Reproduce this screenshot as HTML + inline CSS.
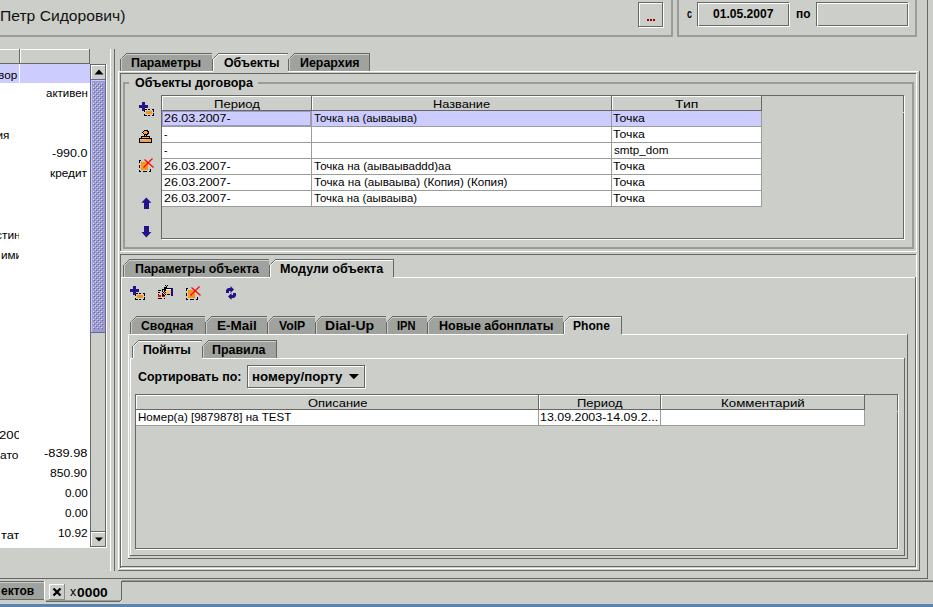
<!DOCTYPE html><html><head><meta charset="utf-8"><style>
html,body{margin:0;padding:0;width:933px;height:607px;overflow:hidden;background:#ccceca}
body>div,.a{position:absolute}
.t{position:absolute;white-space:pre;font-family:"Liberation Sans",sans-serif}
.clip{position:absolute;overflow:hidden}
.clip>div{position:absolute}
</style></head><body>
<div class="t" style="left:-0.40px;top:5.70px;font-size:15.30px;line-height:20px;color:#111;transform:scaleX(1.0232);transform-origin:0 0;">Петр Сидорович)</div>
<div style="left:0px;top:35px;width:673px;height:2px;background:#9a9c98;"></div>
<div style="left:671px;top:0px;width:2px;height:37px;background:#9a9c98;"></div>
<div style="left:638px;top:2px;width:25px;height:1px;background:#666866;"></div>
<div style="left:638px;top:26px;width:25px;height:1px;background:#666866;"></div>
<div style="left:638px;top:2px;width:1px;height:25px;background:#666866;"></div>
<div style="left:662px;top:2px;width:1px;height:25px;background:#666866;"></div>
<div style="left:639px;top:27px;width:25px;height:1px;background:#ffffff;"></div>
<div style="left:663px;top:3px;width:1px;height:25px;background:#ffffff;"></div>
<div style="left:639px;top:3px;width:23px;height:1px;background:#ffffff;"></div>
<div style="left:639px;top:3px;width:1px;height:23px;background:#ffffff;"></div>
<div style="left:647px;top:19px;width:2px;height:2px;background:#990000;"></div>
<div style="left:650px;top:19px;width:2px;height:2px;background:#990000;"></div>
<div style="left:653px;top:19px;width:2px;height:2px;background:#990000;"></div>
<div style="left:677px;top:0px;width:2px;height:37px;background:#9a9c98;"></div>
<div style="left:677px;top:35px;width:240px;height:2px;background:#9a9c98;"></div>
<div style="left:915px;top:0px;width:2px;height:37px;background:#9a9c98;"></div>
<div class="t" style="left:687.00px;top:3.74px;font-size:12.30px;line-height:20px;color:#000;font-weight:bold;transform:scaleX(0.7259);transform-origin:0 0;">с</div>
<div style="left:697px;top:2px;width:92px;height:1px;background:#666866;"></div>
<div style="left:697px;top:25px;width:92px;height:1px;background:#666866;"></div>
<div style="left:697px;top:2px;width:1px;height:24px;background:#666866;"></div>
<div style="left:788px;top:2px;width:1px;height:24px;background:#666866;"></div>
<div style="left:698px;top:3px;width:92px;height:1px;background:#ffffff;"></div>
<div style="left:698px;top:26px;width:92px;height:1px;background:#ffffff;"></div>
<div style="left:698px;top:3px;width:1px;height:24px;background:#ffffff;"></div>
<div style="left:789px;top:3px;width:1px;height:24px;background:#ffffff;"></div>
<div style="left:697px;top:2px;width:92px;height:1px;background:#666866;"></div>
<div style="left:697px;top:2px;width:1px;height:24px;background:#666866;"></div>
<div class="t" style="left:712.70px;top:3.74px;font-size:12.30px;line-height:20px;color:#000;font-weight:bold;transform:scaleX(0.9821);transform-origin:0 0;">01.05.2007</div>
<div class="t" style="left:795.60px;top:3.74px;font-size:12.30px;line-height:20px;color:#000;font-weight:bold;transform:scaleX(0.9675);transform-origin:0 0;">по</div>
<div style="left:816px;top:2px;width:92px;height:1px;background:#666866;"></div>
<div style="left:816px;top:25px;width:92px;height:1px;background:#666866;"></div>
<div style="left:816px;top:2px;width:1px;height:24px;background:#666866;"></div>
<div style="left:907px;top:2px;width:1px;height:24px;background:#666866;"></div>
<div style="left:817px;top:3px;width:92px;height:1px;background:#ffffff;"></div>
<div style="left:817px;top:26px;width:92px;height:1px;background:#ffffff;"></div>
<div style="left:817px;top:3px;width:1px;height:24px;background:#ffffff;"></div>
<div style="left:908px;top:3px;width:1px;height:24px;background:#ffffff;"></div>
<div style="left:816px;top:2px;width:92px;height:1px;background:#666866;"></div>
<div style="left:816px;top:2px;width:1px;height:24px;background:#666866;"></div>
<div style="left:927px;top:0px;width:1px;height:579px;background:#666866;"></div>
<div style="left:0px;top:64px;width:90px;height:484px;background:#ffffff;"></div>
<div style="left:0px;top:49px;width:90px;height:15px;background:#ccceca;"></div>
<div style="left:0px;top:49px;width:90px;height:1px;background:#ffffff;"></div>
<div style="left:0px;top:63px;width:90px;height:1px;background:#666866;"></div>
<div style="left:19px;top:49px;width:1px;height:15px;background:#666866;"></div>
<div style="left:20px;top:49px;width:1px;height:14px;background:#ffffff;"></div>
<div style="left:89px;top:49px;width:1px;height:15px;background:#666866;"></div>
<div style="left:0px;top:64px;width:19px;height:19px;background:#ccccff;"></div>
<div style="left:20px;top:64px;width:70px;height:19px;background:#ccccff;"></div>
<div class="t" style="left:-26.04px;top:65.02px;font-size:11.50px;line-height:20px;color:#000;transform:scaleX(1.0245);transform-origin:0 0;">договор</div>
<div class="t" style="left:45.50px;top:83.02px;font-size:11.50px;line-height:20px;color:#000;transform:scaleX(0.9982);transform-origin:0 0;">активен</div>
<div class="t" style="left:52.00px;top:143.02px;font-size:11.50px;line-height:20px;color:#000;transform:scaleX(1.0839);transform-origin:0 0;">-990.0</div>
<div class="t" style="left:50.40px;top:163.02px;font-size:11.50px;line-height:20px;color:#000;transform:scaleX(1.0279);transform-origin:0 0;">кредит</div>
<div class="t" style="left:44.00px;top:443.02px;font-size:11.50px;line-height:20px;color:#000;transform:scaleX(1.1132);transform-origin:0 0;">-839.98</div>
<div class="t" style="left:50.30px;top:463.02px;font-size:11.50px;line-height:20px;color:#000;transform:scaleX(1.0543);transform-origin:0 0;">850.90</div>
<div class="t" style="left:64.60px;top:483.02px;font-size:11.50px;line-height:20px;color:#000;transform:scaleX(1.0167);transform-origin:0 0;">0.00</div>
<div class="t" style="left:64.60px;top:503.02px;font-size:11.50px;line-height:20px;color:#000;transform:scaleX(1.0167);transform-origin:0 0;">0.00</div>
<div class="t" style="left:57.70px;top:523.02px;font-size:11.50px;line-height:20px;color:#000;transform:scaleX(1.0330);transform-origin:0 0;">10.92</div>
<div class="t" style="left:-10.42px;top:125.02px;font-size:11.50px;line-height:20px;color:#000;transform:scaleX(1.0182);transform-origin:0 0;">ния</div>
<div class="t" style="left:-0.50px;top:445.02px;font-size:11.50px;line-height:20px;color:#000;transform:scaleX(1.0390);transform-origin:0 0;">ато</div>
<div class="clip" style="left:0;top:0;width:19px;height:607px">
<div class="t" style="left:-4.50px;top:225.02px;font-size:11.50px;line-height:20px;color:#000;transform:scaleX(1.0382);transform-origin:0 0;">стинн</div>
<div class="t" style="left:0.80px;top:245.02px;font-size:11.50px;line-height:20px;color:#000;transform:scaleX(1.0169);transform-origin:0 0;">имии</div>
<div class="t" style="left:-0.60px;top:425.02px;font-size:11.50px;line-height:20px;color:#000;transform:scaleX(1.1438);transform-origin:0 0;">2000</div>
</div>
<div class="t" style="left:0.80px;top:525.02px;font-size:11.50px;line-height:20px;color:#000;transform:scaleX(1.1111);transform-origin:0 0;">тат</div>
<div style="left:19px;top:64px;width:1px;height:484px;background:#ffffff;"></div>
<div style="left:90px;top:64px;width:1px;height:484px;background:#666866;"></div>
<div style="left:105px;top:64px;width:1px;height:484px;background:#666866;"></div>
<div style="left:106px;top:64px;width:1px;height:484px;background:#ffffff;"></div>
<div style="left:90px;top:64px;width:16px;height:1px;background:#666866;"></div>
<div style="left:91px;top:65px;width:14px;height:1px;background:#ffffff;"></div>
<div style="left:91px;top:65px;width:1px;height:14px;background:#ffffff;"></div>
<svg class="a" style="left:90px;top:64px" width="17" height="15"><polygon points="4.5,10.5 9,5.5 13.5,10.5" fill="#000"/></svg>
<svg class="a" style="left:90px;top:79px" width="17" height="254" shape-rendering="crispEdges"><defs><pattern id="bm" x="3" y="4" width="4" height="4" patternUnits="userSpaceOnUse"><rect width="4" height="4" fill="#9c9cd0"/><rect x="0" y="0" width="1" height="1" fill="#dcdcff"/><rect x="1" y="1" width="1" height="1" fill="#666699"/><rect x="2" y="2" width="1" height="1" fill="#dcdcff"/><rect x="3" y="3" width="1" height="1" fill="#666699"/></pattern></defs><rect x="0" y="0" width="16" height="254" fill="#666699"/><rect x="1" y="1" width="14" height="252" fill="#ccccff"/><rect x="2" y="2" width="13" height="251" fill="#9c9cd0"/><rect x="3" y="4" width="10" height="246" fill="url(#bm)"/></svg>
<div style="left:90px;top:531px;width:16px;height:1px;background:#666866;"></div>
<div style="left:91px;top:532px;width:14px;height:1px;background:#ffffff;"></div>
<div style="left:91px;top:532px;width:1px;height:14px;background:#ffffff;"></div>
<div style="left:90px;top:546px;width:16px;height:1px;background:#666866;"></div>
<div style="left:90px;top:547px;width:17px;height:1px;background:#ffffff;"></div>
<svg class="a" style="left:90px;top:531px" width="17" height="17"><polygon points="5,6.5 9,10.5 13,6.5" fill="#000"/></svg>
<div style="left:110px;top:49px;width:1px;height:522px;background:#ffffff;"></div>
<div style="left:114px;top:49px;width:1px;height:522px;background:#666866;"></div>
<div style="left:124px;top:55px;width:88px;height:16px;background:#a0a29e;"></div>
<div style="left:122px;top:58px;width:2px;height:13px;background:#a0a29e;"></div>
<svg class="a" style="left:120px;top:53px" width="92" height="18"><line x1="1.5" y1="5.5" x2="6.5" y2="0.5" stroke="#666866" stroke-width="1"/><line x1="1.5" y1="6.5" x2="6.5" y2="1.5" stroke="#ccceca" stroke-width="1"/></svg>
<div style="left:126px;top:53px;width:86px;height:1px;background:#666866;"></div>
<div style="left:120px;top:59px;width:1px;height:12px;background:#666866;"></div>
<div style="left:126px;top:54px;width:85px;height:1px;background:#ccceca;"></div>
<div style="left:121px;top:59px;width:1px;height:12px;background:#ccceca;"></div>
<svg class="a" style="left:212px;top:53px" width="76" height="18"><line x1="1.5" y1="5.5" x2="6.5" y2="0.5" stroke="#666866" stroke-width="1"/><line x1="1.5" y1="6.5" x2="6.5" y2="1.5" stroke="#ffffff" stroke-width="1"/></svg>
<div style="left:218px;top:53px;width:70px;height:1px;background:#666866;"></div>
<div style="left:212px;top:59px;width:1px;height:12px;background:#666866;"></div>
<div style="left:218px;top:54px;width:69px;height:1px;background:#ffffff;"></div>
<div style="left:213px;top:59px;width:1px;height:12px;background:#ffffff;"></div>
<div style="left:292px;top:55px;width:78px;height:16px;background:#a0a29e;"></div>
<div style="left:290px;top:58px;width:2px;height:13px;background:#a0a29e;"></div>
<svg class="a" style="left:288px;top:53px" width="82" height="18"><line x1="1.5" y1="5.5" x2="6.5" y2="0.5" stroke="#666866" stroke-width="1"/><line x1="1.5" y1="6.5" x2="6.5" y2="1.5" stroke="#ccceca" stroke-width="1"/></svg>
<div style="left:294px;top:53px;width:76px;height:1px;background:#666866;"></div>
<div style="left:288px;top:59px;width:1px;height:12px;background:#666866;"></div>
<div style="left:294px;top:54px;width:75px;height:1px;background:#ccceca;"></div>
<div style="left:289px;top:59px;width:1px;height:12px;background:#ccceca;"></div>
<div style="left:369px;top:54px;width:1px;height:17px;background:#666866;"></div>
<div class="t" style="left:131.30px;top:52.74px;font-size:12.30px;line-height:20px;color:#000;font-weight:bold;transform:scaleX(1.0048);transform-origin:0 0;">Параметры</div>
<div class="t" style="left:223.50px;top:52.74px;font-size:12.30px;line-height:20px;color:#000;font-weight:bold;transform:scaleX(1.0005);transform-origin:0 0;">Объекты</div>
<div class="t" style="left:299.80px;top:52.74px;font-size:12.30px;line-height:20px;color:#000;font-weight:bold;transform:scaleX(1.0099);transform-origin:0 0;">Иерархия</div>
<div style="left:118px;top:71px;width:95px;height:1px;background:#ffffff;"></div>
<div style="left:288px;top:71px;width:631px;height:1px;background:#ffffff;"></div>
<div style="left:118px;top:71px;width:1px;height:499px;background:#ffffff;"></div>
<div style="left:118px;top:570px;width:802px;height:1px;background:#666866;"></div>
<div style="left:919px;top:71px;width:1px;height:500px;background:#666866;"></div>
<div style="left:120px;top:73px;width:797px;height:1px;background:#666866;"></div>
<div style="left:120px;top:73px;width:1px;height:179px;background:#666866;"></div>
<div style="left:916px;top:73px;width:1px;height:179px;background:#ffffff;"></div>
<div style="left:120px;top:251px;width:797px;height:1px;background:#ffffff;"></div>
<div style="left:120px;top:254px;width:797px;height:1px;background:#666866;"></div>
<div style="left:120px;top:254px;width:1px;height:315px;background:#666866;"></div>
<div style="left:916px;top:254px;width:1px;height:315px;background:#ffffff;"></div>
<div style="left:120px;top:568px;width:797px;height:1px;background:#ffffff;"></div>
<div style="left:123px;top:82px;width:2px;height:167px;background:#9a9c98;"></div>
<div style="left:912px;top:82px;width:2px;height:167px;background:#9a9c98;"></div>
<div style="left:123px;top:247px;width:791px;height:2px;background:#9a9c98;"></div>
<div style="left:123px;top:82px;width:6px;height:2px;background:#9a9c98;"></div>
<div style="left:258px;top:82px;width:656px;height:2px;background:#9a9c98;"></div>
<div class="t" style="left:134.80px;top:72.74px;font-size:12.30px;line-height:20px;color:#000;font-weight:bold;transform:scaleX(1.0171);transform-origin:0 0;">Объекты договора</div>
<div style="left:161px;top:95px;width:743px;height:1px;background:#666866;"></div>
<div style="left:161px;top:238px;width:743px;height:1px;background:#666866;"></div>
<div style="left:161px;top:95px;width:1px;height:144px;background:#666866;"></div>
<div style="left:903px;top:95px;width:1px;height:144px;background:#666866;"></div>
<div style="left:904px;top:96px;width:1px;height:144px;background:#ffffff;"></div>
<div style="left:162px;top:239px;width:743px;height:1px;background:#ffffff;"></div>
<div style="left:903px;top:112px;width:1px;height:1px;background:#ccceca;"></div>
<div style="left:162px;top:96px;width:150px;height:1px;background:#ffffff;"></div>
<div style="left:162px;top:96px;width:1px;height:15px;background:#ffffff;"></div>
<div style="left:311px;top:96px;width:1px;height:15px;background:#666866;"></div>
<div style="left:162px;top:110px;width:150px;height:1px;background:#666866;"></div>
<div style="left:312px;top:96px;width:300px;height:1px;background:#ffffff;"></div>
<div style="left:312px;top:96px;width:1px;height:15px;background:#ffffff;"></div>
<div style="left:611px;top:96px;width:1px;height:15px;background:#666866;"></div>
<div style="left:312px;top:110px;width:300px;height:1px;background:#666866;"></div>
<div style="left:612px;top:96px;width:150px;height:1px;background:#ffffff;"></div>
<div style="left:612px;top:96px;width:1px;height:15px;background:#ffffff;"></div>
<div style="left:761px;top:96px;width:1px;height:15px;background:#666866;"></div>
<div style="left:612px;top:110px;width:150px;height:1px;background:#666866;"></div>
<div style="left:162px;top:111px;width:599px;height:15px;background:#ccccff;"></div>
<div style="left:162px;top:126px;width:600px;height:1px;background:#9a9c98;"></div>
<div style="left:311px;top:111px;width:1px;height:16px;background:#9a9c98;"></div>
<div style="left:611px;top:111px;width:1px;height:16px;background:#9a9c98;"></div>
<div style="left:761px;top:111px;width:1px;height:16px;background:#9a9c98;"></div>
<div style="left:162px;top:127px;width:599px;height:15px;background:#ffffff;"></div>
<div style="left:162px;top:142px;width:600px;height:1px;background:#9a9c98;"></div>
<div style="left:311px;top:127px;width:1px;height:16px;background:#9a9c98;"></div>
<div style="left:611px;top:127px;width:1px;height:16px;background:#9a9c98;"></div>
<div style="left:761px;top:127px;width:1px;height:16px;background:#9a9c98;"></div>
<div style="left:162px;top:143px;width:599px;height:15px;background:#ffffff;"></div>
<div style="left:162px;top:158px;width:600px;height:1px;background:#9a9c98;"></div>
<div style="left:311px;top:143px;width:1px;height:16px;background:#9a9c98;"></div>
<div style="left:611px;top:143px;width:1px;height:16px;background:#9a9c98;"></div>
<div style="left:761px;top:143px;width:1px;height:16px;background:#9a9c98;"></div>
<div style="left:162px;top:159px;width:599px;height:15px;background:#ffffff;"></div>
<div style="left:162px;top:174px;width:600px;height:1px;background:#9a9c98;"></div>
<div style="left:311px;top:159px;width:1px;height:16px;background:#9a9c98;"></div>
<div style="left:611px;top:159px;width:1px;height:16px;background:#9a9c98;"></div>
<div style="left:761px;top:159px;width:1px;height:16px;background:#9a9c98;"></div>
<div style="left:162px;top:175px;width:599px;height:15px;background:#ffffff;"></div>
<div style="left:162px;top:190px;width:600px;height:1px;background:#9a9c98;"></div>
<div style="left:311px;top:175px;width:1px;height:16px;background:#9a9c98;"></div>
<div style="left:611px;top:175px;width:1px;height:16px;background:#9a9c98;"></div>
<div style="left:761px;top:175px;width:1px;height:16px;background:#9a9c98;"></div>
<div style="left:162px;top:191px;width:599px;height:15px;background:#ffffff;"></div>
<div style="left:162px;top:206px;width:600px;height:1px;background:#9a9c98;"></div>
<div style="left:311px;top:191px;width:1px;height:16px;background:#9a9c98;"></div>
<div style="left:611px;top:191px;width:1px;height:16px;background:#9a9c98;"></div>
<div style="left:761px;top:191px;width:1px;height:16px;background:#9a9c98;"></div>
<div style="left:162px;top:111px;width:149px;height:1px;background:#9999cc;"></div>
<div style="left:162px;top:125px;width:149px;height:1px;background:#9999cc;"></div>
<div style="left:162px;top:111px;width:1px;height:15px;background:#9999cc;"></div>
<div style="left:310px;top:111px;width:1px;height:15px;background:#9999cc;"></div>
<div class="t" style="left:214.00px;top:94.02px;font-size:11.50px;line-height:20px;color:#000;transform:scaleX(1.1396);transform-origin:0 0;">Период</div>
<div class="t" style="left:433.30px;top:94.02px;font-size:11.50px;line-height:20px;color:#000;transform:scaleX(1.1108);transform-origin:0 0;">Название</div>
<div class="t" style="left:675.00px;top:94.02px;font-size:11.50px;line-height:20px;color:#000;transform:scaleX(1.2184);transform-origin:0 0;">Тип</div>
<div class="t" style="left:163.60px;top:108.02px;font-size:11.50px;line-height:20px;color:#000;transform:scaleX(1.0861);transform-origin:0 0;">26.03.2007-</div>
<div class="t" style="left:163.60px;top:156.02px;font-size:11.50px;line-height:20px;color:#000;transform:scaleX(1.0861);transform-origin:0 0;">26.03.2007-</div>
<div class="t" style="left:163.60px;top:172.02px;font-size:11.50px;line-height:20px;color:#000;transform:scaleX(1.0861);transform-origin:0 0;">26.03.2007-</div>
<div class="t" style="left:163.60px;top:188.02px;font-size:11.50px;line-height:20px;color:#000;transform:scaleX(1.0861);transform-origin:0 0;">26.03.2007-</div>
<div class="t" style="left:163.60px;top:124.02px;font-size:11.50px;line-height:20px;color:#000;transform:scaleX(0.8959);transform-origin:0 0;">-</div>
<div class="t" style="left:163.60px;top:140.02px;font-size:11.50px;line-height:20px;color:#000;transform:scaleX(0.8959);transform-origin:0 0;">-</div>
<div class="t" style="left:314.00px;top:108.02px;font-size:11.50px;line-height:20px;color:#000;transform:scaleX(0.9864);transform-origin:0 0;">Точка на (аываыва)</div>
<div class="t" style="left:314.00px;top:188.02px;font-size:11.50px;line-height:20px;color:#000;transform:scaleX(0.9864);transform-origin:0 0;">Точка на (аываыва)</div>
<div class="t" style="left:314.00px;top:156.02px;font-size:11.50px;line-height:20px;color:#000;transform:scaleX(1.0030);transform-origin:0 0;">Точка на (аываываddd)aa</div>
<div class="t" style="left:314.00px;top:172.02px;font-size:11.50px;line-height:20px;color:#000;transform:scaleX(1.0174);transform-origin:0 0;">Точка на (аываыва) (Копия) (Копия)</div>
<div class="t" style="left:613.00px;top:108.02px;font-size:11.50px;line-height:20px;color:#000;transform:scaleX(1.0661);transform-origin:0 0;">Точка</div>
<div class="t" style="left:613.00px;top:124.02px;font-size:11.50px;line-height:20px;color:#000;transform:scaleX(1.0661);transform-origin:0 0;">Точка</div>
<div class="t" style="left:613.00px;top:156.02px;font-size:11.50px;line-height:20px;color:#000;transform:scaleX(1.0661);transform-origin:0 0;">Точка</div>
<div class="t" style="left:613.00px;top:172.02px;font-size:11.50px;line-height:20px;color:#000;transform:scaleX(1.0661);transform-origin:0 0;">Точка</div>
<div class="t" style="left:613.00px;top:188.02px;font-size:11.50px;line-height:20px;color:#000;transform:scaleX(1.0661);transform-origin:0 0;">Точка</div>
<div class="t" style="left:613.60px;top:140.02px;font-size:11.50px;line-height:20px;color:#000;transform:scaleX(1.0129);transform-origin:0 0;">smtp_dom</div>
<svg class="a" style="left:137px;top:99px" width="20" height="20" shape-rendering="crispEdges"><rect x="5" y="3" width="3" height="9" fill="#24128a"/><rect x="2" y="6" width="9" height="3" fill="#24128a"/><rect x="8" y="10" width="2" height="1" fill="#000"/><rect x="11" y="10" width="2" height="1" fill="#000"/><rect x="15" y="10" width="2" height="1" fill="#000"/><rect x="7" y="11" width="1" height="2" fill="#000"/><rect x="7" y="15" width="1" height="2" fill="#000"/><rect x="8" y="16" width="2" height="1" fill="#000"/><rect x="11" y="16" width="2" height="1" fill="#000"/><rect x="15" y="16" width="2" height="1" fill="#000"/><rect x="16" y="11" width="1" height="2" fill="#000"/><rect x="16" y="14" width="1" height="2" fill="#000"/><rect x="9" y="12" width="6" height="3" fill="#fa9214"/></svg>
<svg class="a" style="left:136px;top:126px" width="20" height="20" shape-rendering="crispEdges"><path d="M8,4 H11 L13,6 V7 L11,9 H8 L6,7 V6 Z" fill="#000"/><path d="M8,5 H11 L12,6.5 L11,8 H8 L7,6.5 Z" fill="#f0a050"/><rect x="8" y="8" width="3" height="3" fill="#000"/><rect x="9" y="9" width="1" height="2" fill="#f0a050"/><rect x="5" y="10" width="9" height="2" fill="#000"/><rect x="6" y="11" width="7" height="1" fill="#f0a860"/><rect x="3" y="12" width="13" height="5" fill="#000"/><rect x="4" y="13" width="11" height="3" fill="#f0a050"/><rect x="4" y="13" width="6" height="1" fill="#f8c080"/></svg>
<svg class="a" style="left:136px;top:155px" width="20" height="20" shape-rendering="crispEdges"><rect x="3" y="5" width="2" height="1" fill="#000"/><rect x="3" y="6" width="1" height="2" fill="#000"/><rect x="3" y="10" width="1" height="3" fill="#000"/><rect x="3" y="15" width="1" height="2" fill="#000"/><rect x="4" y="16" width="1" height="1" fill="#000"/><rect x="7" y="16" width="4" height="1" fill="#000"/><rect x="13" y="16" width="2" height="1" fill="#000"/><rect x="14" y="14" width="1" height="2" fill="#000"/><path d="M5,7 H9 L5,12 Z M5,13 L11,11 L12,10 V15 H5 Z" fill="#fa9214"/><rect x="5" y="7" width="7" height="8" fill="#fa9214" opacity="0.85"/><path d="M8.5,4.5 L17.5,12.5 M7.5,12.5 L16.5,3.5" stroke="#ff0000" stroke-width="1.2" fill="none" shape-rendering="auto"/></svg>
<svg class="a" style="left:136px;top:192px" width="20" height="50" shape-rendering="crispEdges"><path d="M10.3,5.5 L15.4,10.7 H13 V17 H8 V10.7 H5.4 Z M8,34 H13 V40 H15.4 L10.3,45.5 L5.4,40 H8 Z" fill="#24128a" shape-rendering="auto"/></svg>
<div style="left:127px;top:261px;width:142px;height:16px;background:#a0a29e;"></div>
<div style="left:125px;top:264px;width:2px;height:13px;background:#a0a29e;"></div>
<svg class="a" style="left:123px;top:259px" width="146" height="18"><line x1="1.5" y1="5.5" x2="6.5" y2="0.5" stroke="#666866" stroke-width="1"/><line x1="1.5" y1="6.5" x2="6.5" y2="1.5" stroke="#ccceca" stroke-width="1"/></svg>
<div style="left:129px;top:259px;width:140px;height:1px;background:#666866;"></div>
<div style="left:123px;top:265px;width:1px;height:12px;background:#666866;"></div>
<div style="left:129px;top:260px;width:139px;height:1px;background:#ccceca;"></div>
<div style="left:124px;top:265px;width:1px;height:12px;background:#ccceca;"></div>
<svg class="a" style="left:269px;top:259px" width="125" height="18"><line x1="1.5" y1="5.5" x2="6.5" y2="0.5" stroke="#666866" stroke-width="1"/><line x1="1.5" y1="6.5" x2="6.5" y2="1.5" stroke="#ffffff" stroke-width="1"/></svg>
<div style="left:275px;top:259px;width:119px;height:1px;background:#666866;"></div>
<div style="left:269px;top:265px;width:1px;height:12px;background:#666866;"></div>
<div style="left:275px;top:260px;width:118px;height:1px;background:#ffffff;"></div>
<div style="left:270px;top:265px;width:1px;height:12px;background:#ffffff;"></div>
<div style="left:393px;top:260px;width:1px;height:17px;background:#666866;"></div>
<div class="t" style="left:134.50px;top:258.74px;font-size:12.30px;line-height:20px;color:#000;font-weight:bold;transform:scaleX(1.0069);transform-origin:0 0;">Параметры объекта</div>
<div class="t" style="left:279.60px;top:258.74px;font-size:12.30px;line-height:20px;color:#000;font-weight:bold;transform:scaleX(1.0239);transform-origin:0 0;">Модули объекта</div>
<div style="left:121px;top:277px;width:149px;height:1px;background:#ffffff;"></div>
<div style="left:394px;top:277px;width:521px;height:1px;background:#ffffff;"></div>
<div style="left:121px;top:277px;width:1px;height:290px;background:#ffffff;"></div>
<div style="left:915px;top:277px;width:1px;height:290px;background:#666866;"></div>
<div style="left:121px;top:566px;width:795px;height:1px;background:#666866;"></div>
<svg class="a" style="left:128px;top:283px" width="20" height="20" shape-rendering="crispEdges"><rect x="5" y="3" width="3" height="9" fill="#24128a"/><rect x="2" y="6" width="9" height="3" fill="#24128a"/><rect x="8" y="10" width="2" height="1" fill="#000"/><rect x="11" y="10" width="2" height="1" fill="#000"/><rect x="15" y="10" width="2" height="1" fill="#000"/><rect x="7" y="11" width="1" height="2" fill="#000"/><rect x="7" y="15" width="1" height="2" fill="#000"/><rect x="8" y="16" width="2" height="1" fill="#000"/><rect x="11" y="16" width="2" height="1" fill="#000"/><rect x="15" y="16" width="2" height="1" fill="#000"/><rect x="16" y="11" width="1" height="2" fill="#000"/><rect x="16" y="14" width="1" height="2" fill="#000"/><rect x="9" y="12" width="6" height="3" fill="#fa9214"/></svg>
<svg class="a" style="left:155px;top:282px" width="20" height="20" shape-rendering="crispEdges"><rect x="3" y="8" width="3" height="1" fill="#000"/><rect x="3" y="10" width="2" height="1" fill="#000"/><rect x="3" y="12" width="1" height="1" fill="#000"/><rect x="3" y="16" width="4" height="1" fill="#000"/><rect x="9" y="16" width="1" height="1" fill="#000"/><rect x="3" y="13" width="3" height="2" fill="#ff0000"/><rect x="7" y="13" width="3" height="2" fill="#ff0000"/><rect x="11" y="6" width="5" height="1" fill="#000"/><rect x="11" y="7" width="5" height="1" fill="#ffffff"/><rect x="11" y="8" width="5" height="4" fill="#f0c080"/><rect x="11" y="12" width="4" height="1" fill="#000"/><rect x="16" y="6" width="2" height="8" fill="#1a0a80"/><rect x="7" y="7" width="2" height="7" fill="#000"/><rect x="9" y="6" width="2" height="8" fill="#000"/><rect x="10" y="3" width="1" height="1" fill="#000"/><rect x="12" y="3" width="1" height="1" fill="#000"/><rect x="11" y="4" width="1" height="2" fill="#000"/><rect x="9" y="5" width="2" height="1" fill="#000"/><rect x="8" y="8" width="1" height="1" fill="#f0c080"/><rect x="7" y="10" width="1" height="1" fill="#f0c080"/><rect x="9" y="10" width="1" height="1" fill="#f0c080"/><rect x="8" y="11" width="1" height="1" fill="#f0c080"/><rect x="10" y="11" width="1" height="1" fill="#f0c080"/><rect x="9" y="12" width="1" height="1" fill="#f0c080"/><rect x="11" y="12" width="1" height="1" fill="#f0c080"/><rect x="10" y="13" width="1" height="1" fill="#f0c080"/><rect x="8" y="9" width="1" height="1" fill="#f0c080"/><rect x="10" y="9" width="1" height="1" fill="#f0c080"/></svg>
<svg class="a" style="left:183px;top:283px" width="20" height="20" shape-rendering="crispEdges"><rect x="3" y="5" width="2" height="1" fill="#000"/><rect x="3" y="6" width="1" height="2" fill="#000"/><rect x="3" y="10" width="1" height="3" fill="#000"/><rect x="3" y="15" width="1" height="2" fill="#000"/><rect x="4" y="16" width="1" height="1" fill="#000"/><rect x="7" y="16" width="4" height="1" fill="#000"/><rect x="13" y="16" width="2" height="1" fill="#000"/><rect x="14" y="14" width="1" height="2" fill="#000"/><path d="M5,7 H9 L5,12 Z M5,13 L11,11 L12,10 V15 H5 Z" fill="#fa9214"/><rect x="5" y="7" width="7" height="8" fill="#fa9214" opacity="0.85"/><path d="M8.5,4.5 L17.5,12.5 M7.5,12.5 L16.5,3.5" stroke="#ff0000" stroke-width="1.2" fill="none" shape-rendering="auto"/></svg>
<svg class="a" style="left:221px;top:283px" width="20" height="20" shape-rendering="crispEdges"><path d="M5,10 V7 L7,5 H9.5 V3 L13,6.5 L9.5,10 V8 H8 L8,10 Z" fill="#24128a" shape-rendering="auto"/><path d="M15,10 V13 L13,15 H10.5 V17 L7,13.5 L10.5,10 V12 H12 L12,10 Z" fill="#24128a" shape-rendering="auto"/></svg>
<div style="left:134px;top:318px;width:71px;height:16px;background:#a0a29e;"></div>
<div style="left:132px;top:321px;width:2px;height:13px;background:#a0a29e;"></div>
<svg class="a" style="left:130px;top:316px" width="75" height="18"><line x1="1.5" y1="5.5" x2="6.5" y2="0.5" stroke="#666866" stroke-width="1"/><line x1="1.5" y1="6.5" x2="6.5" y2="1.5" stroke="#ccceca" stroke-width="1"/></svg>
<div style="left:136px;top:316px;width:69px;height:1px;background:#666866;"></div>
<div style="left:130px;top:322px;width:1px;height:12px;background:#666866;"></div>
<div style="left:136px;top:317px;width:68px;height:1px;background:#ccceca;"></div>
<div style="left:131px;top:322px;width:1px;height:12px;background:#ccceca;"></div>
<div class="t" style="left:141.20px;top:315.74px;font-size:12.30px;line-height:20px;color:#000;font-weight:bold;transform:scaleX(0.9907);transform-origin:0 0;">Сводная</div>
<div style="left:209px;top:318px;width:58px;height:16px;background:#a0a29e;"></div>
<div style="left:207px;top:321px;width:2px;height:13px;background:#a0a29e;"></div>
<svg class="a" style="left:205px;top:316px" width="62" height="18"><line x1="1.5" y1="5.5" x2="6.5" y2="0.5" stroke="#666866" stroke-width="1"/><line x1="1.5" y1="6.5" x2="6.5" y2="1.5" stroke="#ccceca" stroke-width="1"/></svg>
<div style="left:211px;top:316px;width:56px;height:1px;background:#666866;"></div>
<div style="left:205px;top:322px;width:1px;height:12px;background:#666866;"></div>
<div style="left:211px;top:317px;width:55px;height:1px;background:#ccceca;"></div>
<div style="left:206px;top:322px;width:1px;height:12px;background:#ccceca;"></div>
<div class="t" style="left:216.70px;top:315.74px;font-size:12.30px;line-height:20px;color:#000;font-weight:bold;transform:scaleX(1.0978);transform-origin:0 0;">E-Mail</div>
<div style="left:271px;top:318px;width:44px;height:16px;background:#a0a29e;"></div>
<div style="left:269px;top:321px;width:2px;height:13px;background:#a0a29e;"></div>
<svg class="a" style="left:267px;top:316px" width="48" height="18"><line x1="1.5" y1="5.5" x2="6.5" y2="0.5" stroke="#666866" stroke-width="1"/><line x1="1.5" y1="6.5" x2="6.5" y2="1.5" stroke="#ccceca" stroke-width="1"/></svg>
<div style="left:273px;top:316px;width:42px;height:1px;background:#666866;"></div>
<div style="left:267px;top:322px;width:1px;height:12px;background:#666866;"></div>
<div style="left:273px;top:317px;width:41px;height:1px;background:#ccceca;"></div>
<div style="left:268px;top:322px;width:1px;height:12px;background:#ccceca;"></div>
<div class="t" style="left:278.50px;top:315.74px;font-size:12.30px;line-height:20px;color:#000;font-weight:bold;transform:scaleX(0.9945);transform-origin:0 0;">VoIP</div>
<div style="left:319px;top:318px;width:67px;height:16px;background:#a0a29e;"></div>
<div style="left:317px;top:321px;width:2px;height:13px;background:#a0a29e;"></div>
<svg class="a" style="left:315px;top:316px" width="71" height="18"><line x1="1.5" y1="5.5" x2="6.5" y2="0.5" stroke="#666866" stroke-width="1"/><line x1="1.5" y1="6.5" x2="6.5" y2="1.5" stroke="#ccceca" stroke-width="1"/></svg>
<div style="left:321px;top:316px;width:65px;height:1px;background:#666866;"></div>
<div style="left:315px;top:322px;width:1px;height:12px;background:#666866;"></div>
<div style="left:321px;top:317px;width:64px;height:1px;background:#ccceca;"></div>
<div style="left:316px;top:322px;width:1px;height:12px;background:#ccceca;"></div>
<div class="t" style="left:325.40px;top:315.74px;font-size:12.30px;line-height:20px;color:#000;font-weight:bold;transform:scaleX(1.1405);transform-origin:0 0;">Dial-Up</div>
<div style="left:390px;top:318px;width:37px;height:16px;background:#a0a29e;"></div>
<div style="left:388px;top:321px;width:2px;height:13px;background:#a0a29e;"></div>
<svg class="a" style="left:386px;top:316px" width="41" height="18"><line x1="1.5" y1="5.5" x2="6.5" y2="0.5" stroke="#666866" stroke-width="1"/><line x1="1.5" y1="6.5" x2="6.5" y2="1.5" stroke="#ccceca" stroke-width="1"/></svg>
<div style="left:392px;top:316px;width:35px;height:1px;background:#666866;"></div>
<div style="left:386px;top:322px;width:1px;height:12px;background:#666866;"></div>
<div style="left:392px;top:317px;width:34px;height:1px;background:#ccceca;"></div>
<div style="left:387px;top:322px;width:1px;height:12px;background:#ccceca;"></div>
<div class="t" style="left:396.80px;top:315.74px;font-size:12.30px;line-height:20px;color:#000;font-weight:bold;transform:scaleX(0.9006);transform-origin:0 0;">IPN</div>
<div style="left:431px;top:318px;width:132px;height:16px;background:#a0a29e;"></div>
<div style="left:429px;top:321px;width:2px;height:13px;background:#a0a29e;"></div>
<svg class="a" style="left:427px;top:316px" width="136" height="18"><line x1="1.5" y1="5.5" x2="6.5" y2="0.5" stroke="#666866" stroke-width="1"/><line x1="1.5" y1="6.5" x2="6.5" y2="1.5" stroke="#ccceca" stroke-width="1"/></svg>
<div style="left:433px;top:316px;width:130px;height:1px;background:#666866;"></div>
<div style="left:427px;top:322px;width:1px;height:12px;background:#666866;"></div>
<div style="left:433px;top:317px;width:129px;height:1px;background:#ccceca;"></div>
<div style="left:428px;top:322px;width:1px;height:12px;background:#ccceca;"></div>
<div class="t" style="left:438.60px;top:315.74px;font-size:12.30px;line-height:20px;color:#000;font-weight:bold;transform:scaleX(1.0145);transform-origin:0 0;">Новые абонплаты</div>
<svg class="a" style="left:563px;top:316px" width="59" height="18"><line x1="1.5" y1="5.5" x2="6.5" y2="0.5" stroke="#666866" stroke-width="1"/><line x1="1.5" y1="6.5" x2="6.5" y2="1.5" stroke="#ffffff" stroke-width="1"/></svg>
<div style="left:569px;top:316px;width:53px;height:1px;background:#666866;"></div>
<div style="left:563px;top:322px;width:1px;height:12px;background:#666866;"></div>
<div style="left:569px;top:317px;width:52px;height:1px;background:#ffffff;"></div>
<div style="left:564px;top:322px;width:1px;height:12px;background:#ffffff;"></div>
<div style="left:621px;top:317px;width:1px;height:17px;background:#666866;"></div>
<div class="t" style="left:573.30px;top:315.74px;font-size:12.30px;line-height:20px;color:#000;font-weight:bold;transform:scaleX(0.9804);transform-origin:0 0;">Phone</div>
<div style="left:128px;top:334px;width:436px;height:1px;background:#ffffff;"></div>
<div style="left:622px;top:334px;width:285px;height:1px;background:#ffffff;"></div>
<div style="left:128px;top:334px;width:1px;height:224px;background:#ffffff;"></div>
<div style="left:907px;top:334px;width:1px;height:225px;background:#666866;"></div>
<div style="left:128px;top:558px;width:780px;height:1px;background:#666866;"></div>
<svg class="a" style="left:132px;top:340px" width="70" height="18"><line x1="1.5" y1="5.5" x2="6.5" y2="0.5" stroke="#666866" stroke-width="1"/><line x1="1.5" y1="6.5" x2="6.5" y2="1.5" stroke="#ffffff" stroke-width="1"/></svg>
<div style="left:138px;top:340px;width:64px;height:1px;background:#666866;"></div>
<div style="left:132px;top:346px;width:1px;height:12px;background:#666866;"></div>
<div style="left:138px;top:341px;width:63px;height:1px;background:#ffffff;"></div>
<div style="left:133px;top:346px;width:1px;height:12px;background:#ffffff;"></div>
<div style="left:206px;top:342px;width:71px;height:16px;background:#a0a29e;"></div>
<div style="left:204px;top:345px;width:2px;height:13px;background:#a0a29e;"></div>
<svg class="a" style="left:202px;top:340px" width="75" height="18"><line x1="1.5" y1="5.5" x2="6.5" y2="0.5" stroke="#666866" stroke-width="1"/><line x1="1.5" y1="6.5" x2="6.5" y2="1.5" stroke="#ccceca" stroke-width="1"/></svg>
<div style="left:208px;top:340px;width:69px;height:1px;background:#666866;"></div>
<div style="left:202px;top:346px;width:1px;height:12px;background:#666866;"></div>
<div style="left:208px;top:341px;width:68px;height:1px;background:#ccceca;"></div>
<div style="left:203px;top:346px;width:1px;height:12px;background:#ccceca;"></div>
<div style="left:276px;top:341px;width:1px;height:17px;background:#666866;"></div>
<div class="t" style="left:143.10px;top:339.74px;font-size:12.30px;line-height:20px;color:#000;font-weight:bold;transform:scaleX(0.9969);transform-origin:0 0;">Пойнты</div>
<div class="t" style="left:212.00px;top:339.74px;font-size:12.30px;line-height:20px;color:#000;font-weight:bold;transform:scaleX(1.0106);transform-origin:0 0;">Правила</div>
<div style="left:130px;top:358px;width:3px;height:1px;background:#ffffff;"></div>
<div style="left:202px;top:358px;width:702px;height:1px;background:#ffffff;"></div>
<div style="left:130px;top:358px;width:1px;height:197px;background:#ffffff;"></div>
<div style="left:904px;top:358px;width:1px;height:198px;background:#666866;"></div>
<div style="left:130px;top:555px;width:775px;height:1px;background:#666866;"></div>
<div class="t" style="left:137.70px;top:366.74px;font-size:12.30px;line-height:20px;color:#000;font-weight:bold;transform:scaleX(1.0080);transform-origin:0 0;">Сортировать по:</div>
<div style="left:247px;top:365px;width:118px;height:1px;background:#666866;"></div>
<div style="left:247px;top:387px;width:118px;height:1px;background:#666866;"></div>
<div style="left:247px;top:365px;width:1px;height:23px;background:#666866;"></div>
<div style="left:364px;top:365px;width:1px;height:23px;background:#666866;"></div>
<div style="left:248px;top:388px;width:118px;height:1px;background:#ffffff;"></div>
<div style="left:365px;top:366px;width:1px;height:23px;background:#ffffff;"></div>
<div style="left:248px;top:366px;width:116px;height:1px;background:#ffffff;"></div>
<div style="left:248px;top:366px;width:1px;height:21px;background:#ffffff;"></div>
<div class="t" style="left:252.40px;top:366.74px;font-size:12.30px;line-height:20px;color:#000;font-weight:bold;transform:scaleX(1.0800);transform-origin:0 0;">номеру/порту</div>
<svg class="a" style="left:348px;top:373px" width="13" height="8"><polygon points="0.7,1 11,1 5.85,6.3" fill="#000"/></svg>
<div style="left:135px;top:394px;width:763px;height:1px;background:#666866;"></div>
<div style="left:135px;top:548px;width:763px;height:1px;background:#666866;"></div>
<div style="left:135px;top:394px;width:1px;height:155px;background:#666866;"></div>
<div style="left:897px;top:394px;width:1px;height:155px;background:#666866;"></div>
<div style="left:898px;top:395px;width:1px;height:155px;background:#ffffff;"></div>
<div style="left:136px;top:549px;width:763px;height:1px;background:#ffffff;"></div>
<div style="left:897px;top:411px;width:1px;height:1px;background:#ccceca;"></div>
<div style="left:136px;top:395px;width:403px;height:1px;background:#ffffff;"></div>
<div style="left:136px;top:395px;width:1px;height:15px;background:#ffffff;"></div>
<div style="left:538px;top:395px;width:1px;height:15px;background:#666866;"></div>
<div style="left:136px;top:409px;width:403px;height:1px;background:#666866;"></div>
<div style="left:539px;top:395px;width:122px;height:1px;background:#ffffff;"></div>
<div style="left:539px;top:395px;width:1px;height:15px;background:#ffffff;"></div>
<div style="left:660px;top:395px;width:1px;height:15px;background:#666866;"></div>
<div style="left:539px;top:409px;width:122px;height:1px;background:#666866;"></div>
<div style="left:661px;top:395px;width:204px;height:1px;background:#ffffff;"></div>
<div style="left:661px;top:395px;width:1px;height:15px;background:#ffffff;"></div>
<div style="left:864px;top:395px;width:1px;height:15px;background:#666866;"></div>
<div style="left:661px;top:409px;width:204px;height:1px;background:#666866;"></div>
<div class="t" style="left:307.50px;top:393.02px;font-size:11.50px;line-height:20px;color:#000;transform:scaleX(1.1229);transform-origin:0 0;">Описание</div>
<div class="t" style="left:577.40px;top:393.02px;font-size:11.50px;line-height:20px;color:#000;transform:scaleX(1.1272);transform-origin:0 0;">Период</div>
<div class="t" style="left:721.30px;top:393.02px;font-size:11.50px;line-height:20px;color:#000;transform:scaleX(1.1567);transform-origin:0 0;">Комментарий</div>
<div style="left:136px;top:410px;width:729px;height:15px;background:#ffffff;"></div>
<div style="left:136px;top:425px;width:729px;height:1px;background:#9a9c98;"></div>
<div style="left:538px;top:410px;width:1px;height:16px;background:#9a9c98;"></div>
<div style="left:660px;top:410px;width:1px;height:16px;background:#9a9c98;"></div>
<div style="left:864px;top:410px;width:1px;height:16px;background:#9a9c98;"></div>
<div class="t" style="left:137.80px;top:407.02px;font-size:11.50px;line-height:20px;color:#000;transform:scaleX(1.0061);transform-origin:0 0;">Номер(а) [9879878] на TEST</div>
<div class="t" style="left:540.20px;top:407.02px;font-size:11.50px;line-height:20px;color:#000;transform:scaleX(1.0799);transform-origin:0 0;">13.09.2003-14.09.2...</div>
<div style="left:0px;top:578px;width:928px;height:1px;background:#666866;"></div>
<div style="left:0px;top:582px;width:44px;height:17px;background:#a0a29e;"></div>
<div style="left:0px;top:581px;width:44px;height:1px;background:#666866;"></div>
<div style="left:0px;top:599px;width:44px;height:1px;background:#666866;"></div>
<div style="left:0px;top:582px;width:44px;height:1px;background:#ccceca;"></div>
<div class="t" style="left:1.10px;top:580.74px;font-size:12.30px;line-height:20px;color:#000;font-weight:bold;transform:scaleX(0.9780);transform-origin:0 0;">ектов</div>
<div style="left:44px;top:581px;width:1px;height:19px;background:#ffffff;"></div>
<div style="left:46px;top:600px;width:74px;height:1px;background:#9a9c98;"></div>
<div style="left:46px;top:601px;width:74px;height:1px;background:#666866;"></div>
<div style="left:121px;top:581px;width:1px;height:19px;background:#666866;"></div>
<div style="left:120px;top:600px;width:1px;height:1px;background:#666866;"></div>
<div style="left:122px;top:580px;width:811px;height:1px;background:#9a9c98;"></div>
<div style="left:122px;top:581px;width:811px;height:1px;background:#666866;"></div>
<div style="left:49px;top:584px;width:16px;height:1px;background:#888a86;"></div>
<div style="left:49px;top:599px;width:16px;height:1px;background:#888a86;"></div>
<div style="left:49px;top:584px;width:1px;height:16px;background:#888a86;"></div>
<div style="left:64px;top:584px;width:1px;height:16px;background:#888a86;"></div>
<div style="left:49px;top:584px;width:15px;height:1px;background:#ffffff;"></div>
<div style="left:49px;top:584px;width:1px;height:15px;background:#ffffff;"></div>
<svg class="a" style="left:49px;top:584px" width="16" height="16"><path d="M4.5,4.5 L11.5,11.5 M11.5,4.5 L4.5,11.5" stroke="#000" stroke-width="2.2"/></svg>
<div class="t" style="left:70.40px;top:582.32px;font-size:13.50px;line-height:20px;color:#000;transform:scaleX(0.9185);transform-origin:0 0;">x</div>
<div class="t" style="left:77.30px;top:582.74px;font-size:12.30px;line-height:20px;color:#000;font-weight:bold;transform:scaleX(1.1243);transform-origin:0 0;">0000</div>
<div style="left:0px;top:603px;width:933px;height:1px;background:#d0d4d2;"></div>
<div style="left:0px;top:604px;width:933px;height:3px;background:#5a84ad;"></div>
</body></html>
